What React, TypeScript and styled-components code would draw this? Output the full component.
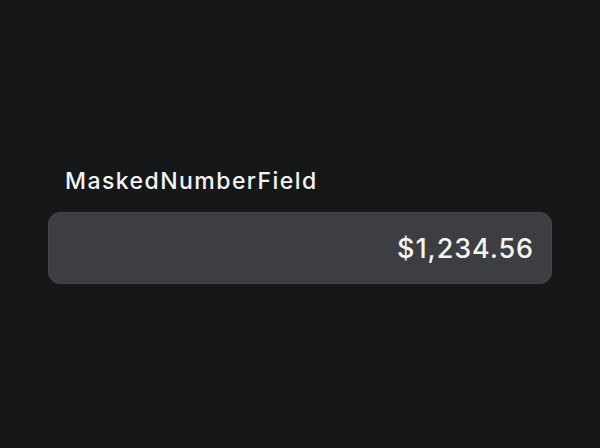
import React, { useState } from 'react'
import styled, { createGlobalStyle } from 'styled-components'

const GlobalStyle = createGlobalStyle`
  html, body {
    margin: 0;
    padding: 0;
    background: #161719;
  }
  body {
    font-family: 'Inter', 'Noto Sans', sans-serif;
    color: #f2f2f3;
  }
`

const Page = styled.div`
  width: 600px;
  height: 448px;
  display: flex;
  align-items: center;
  justify-content: center;
  background: #161719;
`

const Field = styled.div`
  width: 504px;
  margin-top: 3px;
  display: flex;
  flex-direction: column;
  gap: 17px;
`

const Label = styled.label`
  padding-left: 17px;
  font-size: 23px;
  font-weight: 500;
  line-height: 28px;
  letter-spacing: 1.45px;
  color: #f4f4f5;
`

const Input = styled.input`
  box-sizing: border-box;
  width: 100%;
  height: 72px;
  padding: 0 17px;
  border: 1px solid #46474b;
  border-radius: 12px;
  background: #3d3e42;
  color: #f4f4f5;
  font-family: 'Inter', 'Noto Sans', sans-serif;
  font-size: 27px;
  font-weight: 500;
  letter-spacing: 0.9px;
  text-align: right;
  outline: none;
`

const format = (raw: string) => {
  const digits = raw.replace(/[^0-9]/g, '')
  const cents = parseInt(digits || '0', 10)
  return '$' + (cents / 100).toLocaleString('en-US', { minimumFractionDigits: 2, maximumFractionDigits: 2 })
}

const App: React.FC = () => {
  const [value, setValue] = useState('$1,234.56')

  return (
    <Page>
      <GlobalStyle />
      <Field>
        <Label htmlFor="amount">MaskedNumberField</Label>
        <Input
          id="amount"
          value={value}
          onChange={(e) => setValue(format(e.target.value))}
        />
      </Field>
    </Page>
  )
}

export default App
